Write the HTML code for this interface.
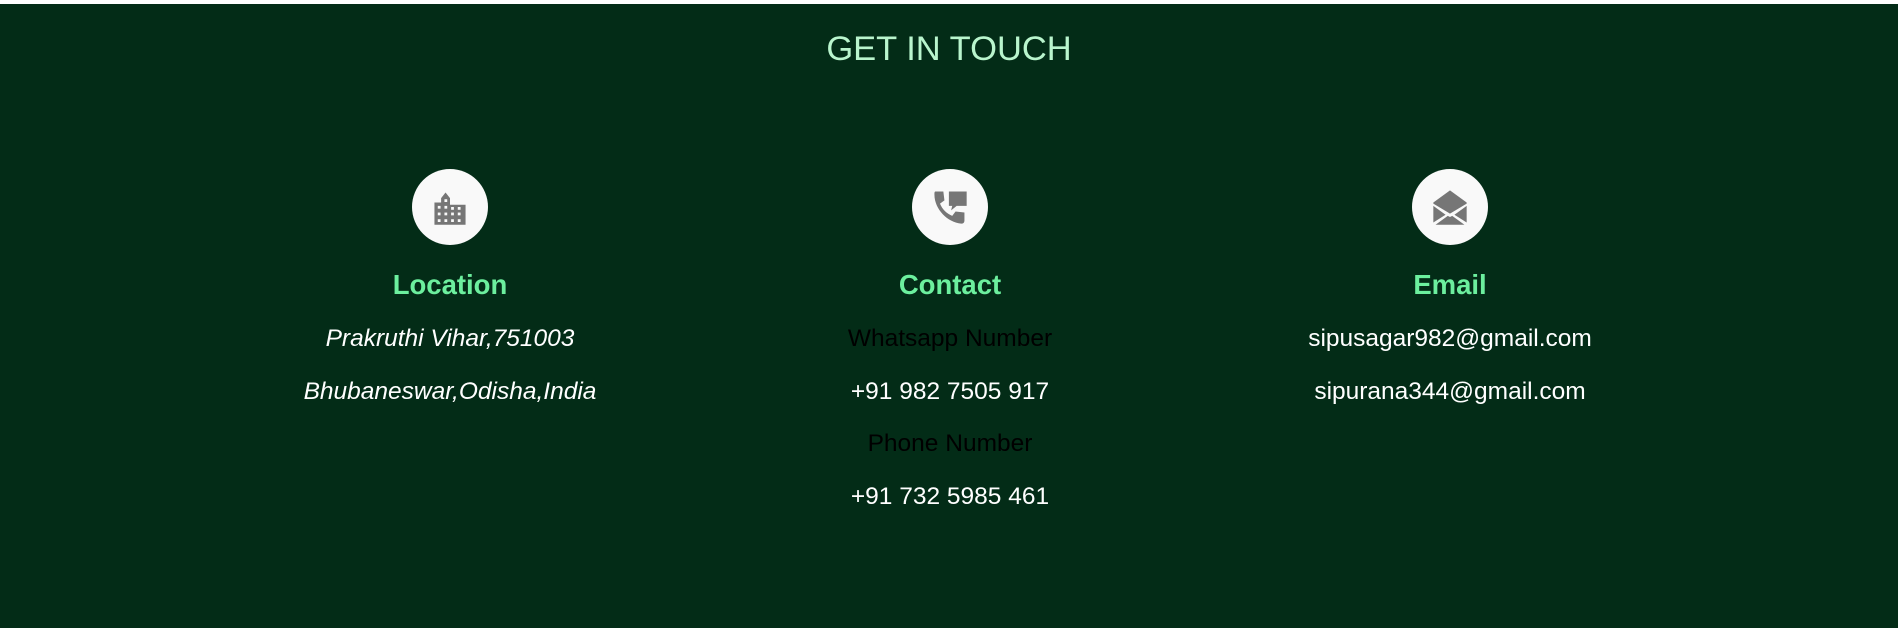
<!DOCTYPE html>
<html><head><meta charset="utf-8"><style>
html,body{margin:0;padding:0;width:1898px;height:628px;overflow:hidden;background:#fff}
.bg{position:absolute;top:4px;left:0;width:1898px;height:624px;background:#032c17;font-family:"Liberation Sans",sans-serif}
.t{position:absolute;left:0;width:1898px;text-align:center;top:26px;font-size:34.5px;color:#b9f5cd}
.col{position:absolute;width:500px;text-align:center}
.ic{position:absolute;left:212px;top:165px;width:76px;height:76px;border-radius:50%;background:#f9f9f9}
.ic svg{position:absolute;left:18px;top:18px;width:40px;height:40px}
.h{position:absolute;left:0;width:500px;top:265px;font-size:27.5px;font-weight:bold;color:#6cef9e}
.l{position:absolute;left:0;width:500px;font-size:24.5px;color:#fff}
.i{font-style:italic}
.k{color:#000}
</style></head><body>
<div class="bg">
<div class="t">GET IN TOUCH</div>

<div class="col" style="left:200px;top:0">
<div class="ic"><svg viewBox="0 0 36 36"><path fill="#767676" d="M4 14h6v-4l4-5 4 5v6h14v18H4z"/><g fill="#f9f9f9"><rect x="13" y="11" width="2.5" height="2.5"/><rect x="7" y="17" width="2.5" height="2.5"/><rect x="13" y="17" width="2.5" height="2.5"/><rect x="7" y="23" width="2.5" height="2.5"/><rect x="13" y="23" width="2.5" height="2.5"/><rect x="19" y="23" width="2.5" height="2.5"/><rect x="25" y="23" width="2.5" height="2.5"/><rect x="7" y="29" width="2.5" height="2.5"/><rect x="13" y="29" width="2.5" height="2.5"/><rect x="19" y="29" width="2.5" height="2.5"/><rect x="25" y="29" width="2.5" height="2.5"/><rect x="19" y="18" width="2.5" height="2.5"/><rect x="25" y="18" width="2.5" height="2.5"/></g></svg></div>
<div class="h">Location</div>
<div class="l i" style="top:321px">Prakruthi Vihar,751003</div>
<div class="l i" style="top:374px">Bhubaneswar,Odisha,India</div>
</div>

<div class="col" style="left:700px;top:0">
<div class="ic"><svg viewBox="0 0 36 36"><path fill="#767676" d="M5 4h7l1 8-4 3c2 5 6 9 11 11l3-4 8 1v7c0 2-1 3-3 3C16 32 4 20 4 7c0-2 0-3 1-3z"/><path fill="#767676" d="M17 4h16v13h-9l-5 4 1-4h-3z"/></svg></div>
<div class="h">Contact</div>
<div class="l k" style="top:321px">Whatsapp Number</div>
<div class="l" style="top:374px">+91 982 7505 917</div>
<div class="l k" style="top:426px">Phone Number</div>
<div class="l" style="top:479px">+91 732 5985 461</div>
</div>

<div class="col" style="left:1200px;top:0">
<div class="ic"><svg viewBox="0 0 36 36"><path fill="#767676" d="M18 3l15 11v1L18 24 3 15v-1z"/><path fill="#767676" d="M3 17l11 8-11 7zM33 17l-11 8 11 7zM5 34l11-8 2 1 2-1 11 8z"/></svg></div>
<div class="h">Email</div>
<div class="l" style="top:321px">sipusagar982@gmail.com</div>
<div class="l" style="top:374px">sipurana344@gmail.com</div>
</div>
</div>
</body></html>
